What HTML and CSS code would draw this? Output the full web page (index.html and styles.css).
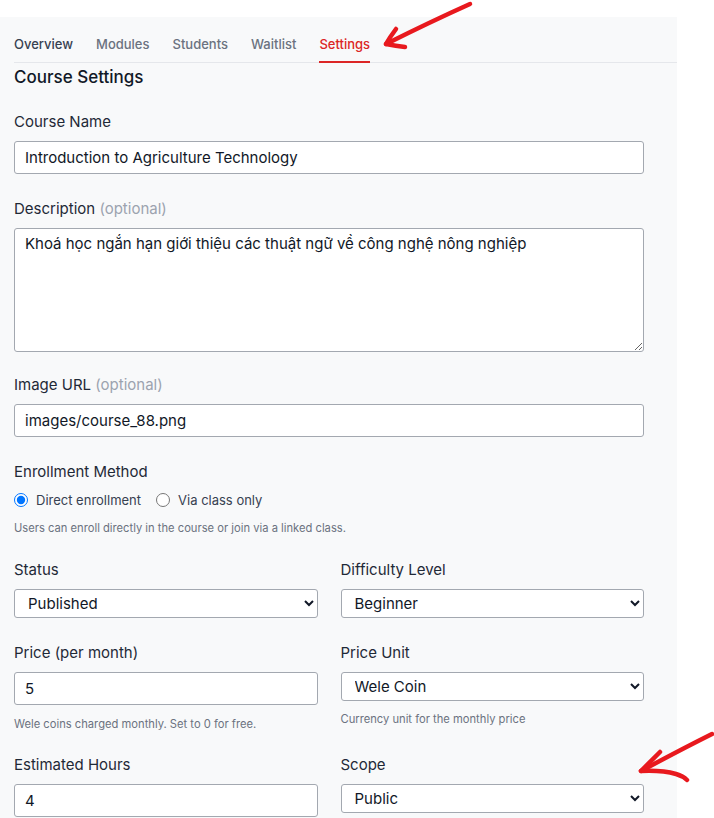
FILE: index.html
```html
<!DOCTYPE html>
<html lang="en">
<head>
<meta charset="utf-8">
<title>Course Settings</title>
<link rel="stylesheet" href="styles.css">
</head>
<body>
<div class="panel">
  <nav class="tabs">
    <a class="tab tab-dark">Overview</a>
    <a class="tab">Modules</a>
    <a class="tab">Students</a>
    <a class="tab">Waitlist</a>
    <a class="tab tab-active">Settings</a>
  </nav>
  <h2 class="title">Course Settings</h2>
  <form class="form">
    <div class="field">
      <label class="label">Course Name</label>
      <input class="control" type="text" value="Introduction to Agriculture Technology">
    </div>
    <div class="field field-area">
      <label class="label">Description <span class="opt">(optional)</span></label>
      <textarea class="control area">Khoá học ngắn hạn giới thiệu các thuật ngữ về công nghệ nông nghiệp</textarea>
    </div>
    <div class="field">
      <label class="label">Image URL <span class="opt">(optional)</span></label>
      <input class="control" type="text" value="images/course_88.png">
    </div>
    <div class="field field-radio">
      <label class="label label-radio">Enrollment Method</label>
      <div class="radios">
        <label class="radio"><input type="radio" name="em" checked><span>Direct enrollment</span></label>
        <label class="radio"><input type="radio" name="em"><span>Via class only</span></label>
      </div>
      <p class="help help-radio">Users can enroll directly in the course or join via a linked class.</p>
    </div>
    <div class="grid">
      <div class="field">
        <label class="label">Status</label>
        <select class="control sel"><option>Published</option></select>
      </div>
      <div class="field">
        <label class="label">Difficulty Level</label>
        <select class="control sel"><option>Beginner</option></select>
      </div>
      <div class="field field-help">
        <label class="label">Price (per month)</label>
        <input class="control" type="text" value="5">
        <p class="help">Wele coins charged monthly. Set to 0 for free.</p>
      </div>
      <div class="field field-help">
        <label class="label">Price Unit</label>
        <select class="control sel"><option>Wele Coin</option></select>
        <p class="help help-sel">Currency unit for the monthly price</p>
      </div>
      <div class="field">
        <label class="label">Estimated Hours</label>
        <input class="control" type="text" value="4">
      </div>
      <div class="field">
        <label class="label">Scope</label>
        <select class="control sel"><option>Public</option></select>
      </div>
    </div>
  </form>
</div>
<svg class="annot" width="714" height="818" viewBox="0 0 714 818">
  <g fill="none" stroke="#e8191e" stroke-width="4.5" stroke-linecap="round" stroke-linejoin="round">
    <path d="M470 4 Q430 22 386 44"/>
    <path d="M396 29 Q390 37 386 44 Q396 46 405 47"/>
    <path d="M712 734 Q680 750 641 771"/>
    <path d="M660 752 Q650 762 641 771 Q662 770 676 774 Q683 776 687 780"/>
  </g>
</svg>
</body>
</html>
```
FILE: styles.css
```css
* { box-sizing: border-box; }
html, body { margin: 0; padding: 0; background: #ffffff; }
body {
  font-family: Inter, "Noto Sans", "Liberation Sans", sans-serif;
  color: #111827;
  position: relative;
  width: 714px;
  height: 818px;
  overflow: hidden;
}
.panel {
  margin-top: 17px;
  width: 677px;
  min-height: 801px;
  background: #f8f9fa;
  padding-left: 14px;
}
.tabs {
  display: flex;
  gap: 23px;
  border-bottom: 1px solid #e5e7eb;
}
.tab {
  font-size: 13px;
  line-height: 16px;
  font-weight: 500;
  color: #6b7280;
  padding: 19px 0 9px;
  border-bottom: 2px solid transparent;
  margin-bottom: -1px;
}
.tab-dark { color: #374151; }
.tab-active { color: #dc2626; border-bottom-color: #dc2626; }
.title {
  margin: 3px 0 0;
  font-size: 17px;
  line-height: 22px;
  font-weight: 500;
  color: #111827;
}
.form {
  width: 630px;
  margin-top: 23px;
}
.field { margin-bottom: 24px; display: flex; flex-direction: column; }
.field-area { margin-bottom: 22px; }
.field-radio { margin-bottom: 23px; }
.field-help { margin-bottom: 22px; }
.label {
  font-size: 15px;
  line-height: 22px;
  color: #1f2937;
  margin-bottom: 8px;
}
.label-radio { margin-bottom: 7px; }
.opt { color: #9ca3af; }
.control {
  font-family: Inter, "Noto Sans", "Liberation Sans", sans-serif;
  font-size: 15px;
  color: #111827;
  background: #ffffff;
  border: 1px solid #a3a8b0;
  border-radius: 3px;
  height: 33px;
  padding: 0 10px;
  width: 100%;
  margin: 0;
  outline: none;
}
.area {
  height: 124px;
  padding: 5px 10px;
  line-height: 20px;
  display: block;
}
.sel {
  height: 29px;
  padding: 0 8px 0 9px;
}
.radios { display: flex; gap: 15px; align-items: center; height: 20px; }
.radio {
  display: flex;
  align-items: center;
  gap: 8px;
  font-size: 13px;
  color: #374151;
}
.radio input { margin: 0; width: 14px; height: 14px; }
.help {
  margin: 11px 0 0;
  font-size: 11.2px;
  line-height: 16px;
  color: #6b7280;
}
.help-radio { margin-top: 10px; }
.help-sel { margin-top: 10px; }
.grid {
  display: grid;
  grid-template-columns: 1fr 1fr;
  column-gap: 23px;
  align-items: start;
}
.annot {
  position: absolute;
  left: 0;
  top: 0;
  pointer-events: none;
}
```
